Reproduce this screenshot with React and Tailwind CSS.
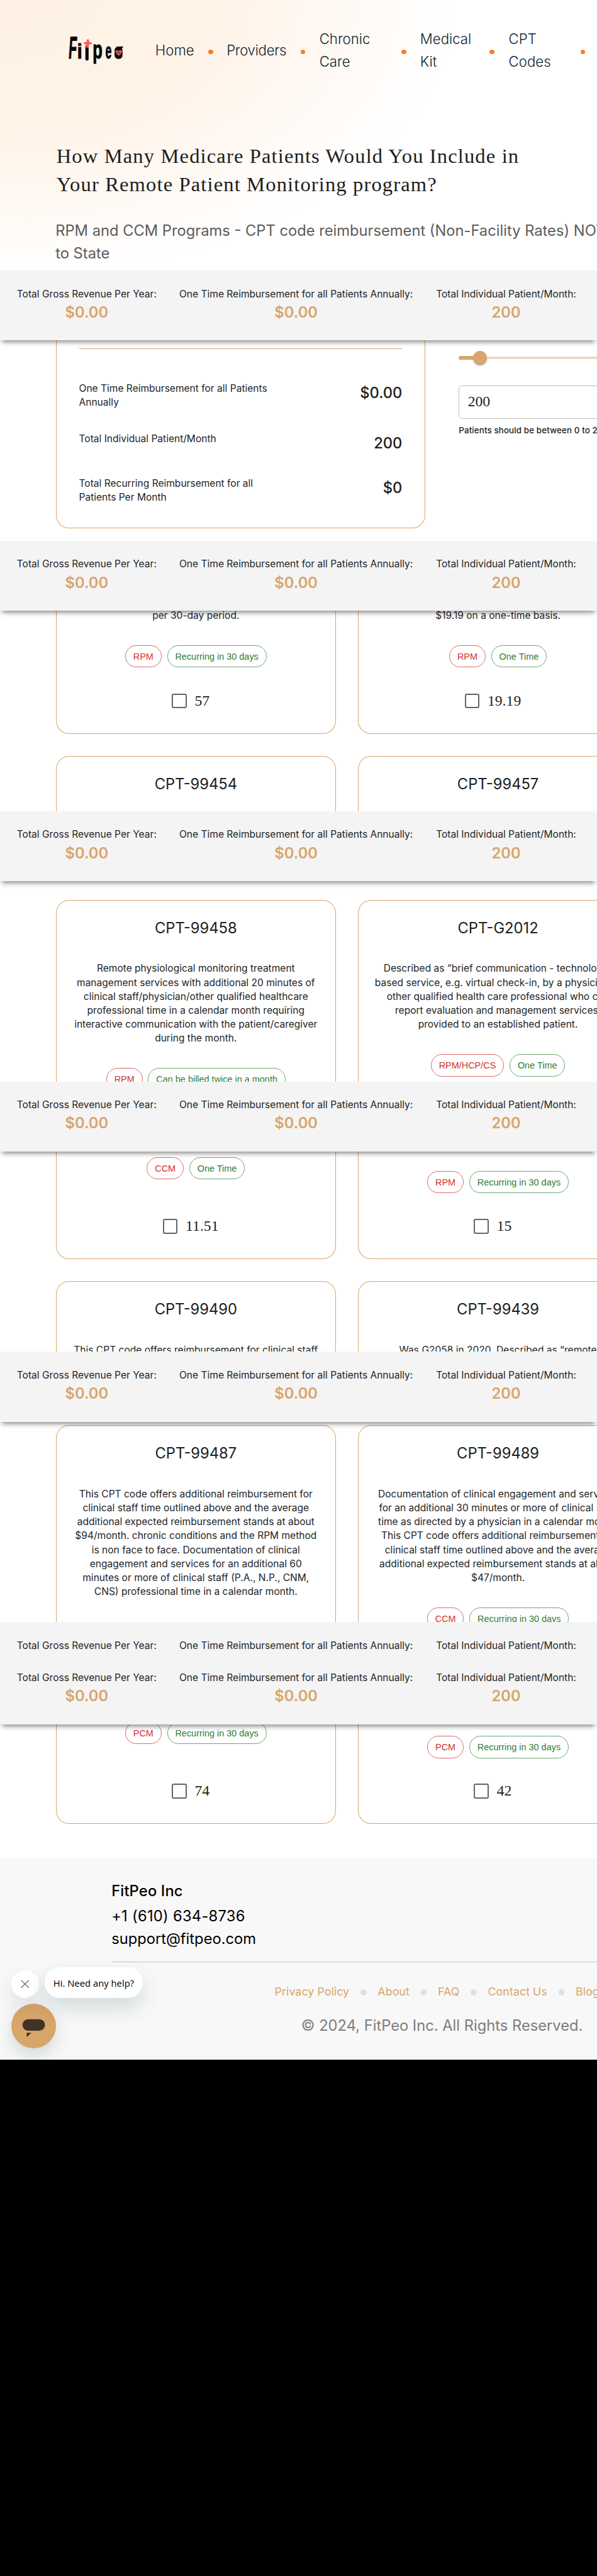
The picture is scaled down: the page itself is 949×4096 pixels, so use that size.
import React from "react";

const bars = [
  { label: "Total Gross Revenue Per Year:", value: "$0.00" },
  { label: "One Time Reimbursement for all Patients Annually:", value: "$0.00" },
  { label: "Total Individual Patient/Month:", value: "200" },
];

function SummaryBar({ cropped = false }) {
  return (
    <div
      className={
        cropped
          ? "h-[69px] shrink-0 overflow-hidden bg-[#f4f4f4]"
          : "relative z-10 h-[150px] shrink-0 bg-[#f4f4f4] shadow-[0_9px_10px_-4px_rgba(0,0,0,0.45)]"
      }
    >
      <div className="grid grid-cols-[300px_502px_303px] gap-x-[48px] pl-[36px] pt-[36px] text-center whitespace-nowrap">
        {bars.map((b) => (
          <div key={b.label}>
            <div className="text-[21px] leading-[30px] text-[#232527]">{b.label}</div>
            {!cropped && <div className="text-[32px] leading-[48px] font-semibold text-[#d8a56a]">{b.value}</div>}
          </div>
        ))}
      </div>
    </div>
  );
}

function Logo() {
  return (
    <svg width="118" height="62" viewBox="148 78 118 62" className="block overflow-visible" fill="#070707">
      <g fontFamily="Liberation Sans" fontWeight="700" stroke="#070707" strokeWidth="1.500" strokeLinejoin="round">
        <text transform="translate(147 127) skewX(-4) scale(.42 1)" fontSize="67">F</text>
        <text transform="translate(166.500 126.500) scale(.85 1)" fontSize="45">i</text>
        <text transform="translate(199.500 127) scale(.64 1)" fontSize="54">p</text>
        <text transform="translate(227 126.800) scale(.5 1)" fontSize="48">e</text>
      </g>
      <rect x="184" y="98" width="7" height="33" rx="3" />
      <path d="M187 87q2.500-3.500 5 0l.4 4.500 5.500.8q1.500 2-.5 3.500l-5.600.4-.6 7h-6l.2-7-4.200-.5q-1.500-2.200.3-3.800l5-.6z" fill="#ff5a60" />
      <rect x="246.700" y="101.500" width="17" height="26" rx="7.500" />
      <path d="M249 101.500q8-1 15.500-.8v2.800l-6 1.500z" />
      <path d="M255.700 120.700c-5-4-7-6-7-9 0-3.500 5-4 7-.8 2-3.200 7-2.700 7 .8 0 3-2 5-7 9z" fill="#ff5a60" />
      <path d="M250 114h3l1.500-3 1.500 6 1.500-3h4" fill="none" stroke="#070707" strokeWidth=".9" />
    </svg>
  );
}

const Dot = () => <span className="mt-[7px] block size-[10px] rounded-full bg-[#ff7a2c]" />;

function Hero() {
  return (
    <header className="h-[580px] shrink-0 overflow-hidden bg-[radial-gradient(ellipse_980px_600px_at_0_0,#fff2e5_0%,#fff3e7_45%,#fff8f2_70%,#ffffff_100%)] pt-[60px]">
      <nav className="grid h-[96px] grid-cols-[186px_114px_39px_159px_40px_176px_40px_149px_41px_154px_35px] items-center pl-[147px] text-[30px] leading-[48px] font-light text-[#0c2530]">
        <Logo />
        <a>Home</a>
        <Dot />
        <a className="tracking-[-0.4px]">Providers</a>
        <Dot />
        <a>Chronic<br />Care</a>
        <Dot />
        <a>Medical<br />Kit</a>
        <Dot />
        <a>CPT<br />Codes</a>
        <Dot />
      </nav>
      <h1 className="mt-[149px] pl-[121px] font-['Liberation_Serif',serif] text-[44px] leading-[60px] tracking-[1.5px] whitespace-nowrap text-[#1c1e20]">
        How Many Medicare Patients Would You Include in<br />Your Remote Patient Monitoring program?
      </h1>
      <p className="mt-[46px] pl-[119px] text-[32px] leading-[48px] whitespace-nowrap text-[#5c5c5c]">
        RPM and CCM Programs - CPT code reimbursement (Non-Facility Rates) NOT<br />to State
      </p>
    </header>
  );
}

const totals = [
  { label: ["One Time Reimbursement for all Patients", "Annually"], value: "$0.00" },
  { label: ["Total Individual Patient/Month"], value: "200" },
  { label: ["Total Recurring Reimbursement for all", "Patients Per Month"], value: "$0" },
];

function Lines({ lines }) {
  return lines.map((l) => (
    <span key={l} className="block whitespace-nowrap">{l}</span>
  ));
}

function Calculator() {
  return (
    <section className="flex h-[430px] shrink-0 overflow-hidden bg-white pl-[120px]">
      <div className="h-[403px] w-[792px] shrink-0 rounded-b-[28px] border-x border-b border-[#d8a56a] px-[48px] pt-[17px]">
        <div className="h-px bg-[#d8a56a]" />
        <div className="mt-[71px] flex flex-col gap-[48px]">
          {totals.map((t) => (
            <div key={t.value} className="flex items-start justify-between">
              <div className="text-[21px] leading-[30px] text-[#232527]"><Lines lines={t.label} /></div>
              <div className="text-[32px] leading-[48px] font-medium text-[#1c1e20]">{t.value}</div>
            </div>
          ))}
        </div>
      </div>
      <div className="ml-[72px] w-[600px] shrink-0 pt-[23px]">
        <div className="flex h-[30px] items-center">
          <div className="h-[8px] w-[30px] rounded-l-full bg-[#d8a56a]" />
          <div className="size-[30px] rounded-full bg-[#d8a56a] shadow-[0_2px_3px_rgba(0,0,0,0.3)]" />
          <div className="h-[6px] flex-1 bg-[#eedbc3]" />
        </div>
        <div className="mt-[44px] flex h-[71px] items-center rounded-[7px] border border-[#bdbdbd] pl-[18px] font-['Liberation_Serif',serif] text-[32px] text-[#1c1e20]">200</div>
        <div className="mt-[14px] text-[18px] leading-[24px] font-medium tracking-[0.18px] whitespace-nowrap text-[#1c1e20]">Patients should be between 0 to 2000</div>
      </div>
    </section>
  );
}

function Chips({ program, billing }) {
  return (
    <div className="flex h-[48px] shrink-0 justify-center gap-[12px] font-['Liberation_Sans',sans-serif] text-[19.5px] leading-[46px] whitespace-nowrap">
      <span className="rounded-full border border-[#e06767] px-[16px] text-[#d32f2f]">{program}</span>
      <span className="rounded-full border border-[#6da770] px-[16px] text-[#2e7d32]">{billing}</span>
    </div>
  );
}

function Rate({ value }) {
  return (
    <label className="mt-auto mb-[53px] flex justify-center gap-[17px] pr-[22px] font-['Liberation_Serif',serif] text-[32px] leading-[32px] text-[#1c1e20]">
      <span className="size-[32px] rounded-[4px] border-[4px] border-[#646464]" />
      {value}
    </label>
  );
}

function Description({ lines }) {
  return (
    <div className="flex shrink-0 flex-col items-center text-[21px] leading-[30px] text-[#232527]">
      <Lines lines={lines} />
    </div>
  );
}

function CardTop({ code, lines, program, billing }) {
  return (
    <div className="flex w-[600px] shrink-0 flex-col gap-[48px] overflow-hidden rounded-t-[28px] border-x border-t border-[#d8a56a] bg-white pt-[35px]">
      <h2 className="text-center text-[32px] leading-[48px] text-[#1c1e20]">{code}</h2>
      {lines && <Description lines={lines} />}
      {program && <Chips program={program} billing={billing} />}
    </div>
  );
}

function CardBottom({ line, program, billing, value, offset }) {
  return (
    <div className="flex w-[600px] shrink-0 flex-col rounded-b-[28px] border-x border-b border-[#d8a56a] bg-white">
      <div className={offset}>
        {line && <div className="mb-[48px]"><Description lines={[line]} /></div>}
        <Chips program={program} billing={billing} />
      </div>
      <Rate value={value} />
    </div>
  );
}

const row = "flex shrink-0 gap-[48px] pl-[120px]";

const links = ["Privacy Policy", "About", "FAQ", "Contact Us", "Blog"];

function ChatWidget() {
  return (
    <div className="absolute top-[235px] left-[24px] z-10">
      <div className="flex items-end gap-[12px]">
        <div className="flex size-[60px] items-center justify-center rounded-full bg-white shadow-[0_18px_40px_rgba(0,60,60,0.12)]">
          <svg width="18" height="18" viewBox="0 0 18 18" stroke="#566069" strokeWidth="1.500"><path d="M.8.8l16.400 16.400M17.200.8L.8 17.200" /></svg>
        </div>
        <div className="h-[66px] w-[210px] rounded-[32px] bg-white text-center font-['Open_Sans',sans-serif] text-[20px] leading-[68px] whitespace-nowrap text-black shadow-[0_20px_44px_rgba(0,60,60,0.16)]">Hi. Need any help?</div>
      </div>
      <div className="mt-[12px] size-[96px] rounded-full bg-[#d8a56a] shadow-[0_16px_36px_rgba(0,60,60,0.16)]">
        <svg width="96" height="96" viewBox="0 0 96 96" fill="#403224"><rect x="23.800" y="33.300" width="48.400" height="24.600" rx="12.300" /><path d="M33 62.300h10L33 72z" /></svg>
      </div>
    </div>
  );
}

function Footer() {
  return (
    <footer className="relative h-[433px] shrink-0 overflow-hidden bg-[#f8f8f8] pt-[47px]">
      <div className="pl-[239px] text-[32px] leading-[48px] text-black">
        <div className="font-medium tracking-[0.2px]">FitPeo Inc</div>
        <div className="mt-[6px] tracking-[0.38px]">+1 (610) 634-8736</div>
        <div>support@fitpeo.com</div>
        <div className="mt-[25px] ml-px h-px bg-[#c2c2c2]" />
      </div>
      <div className="mt-[47px] flex items-center gap-[24px] pl-[589px] text-[24px] leading-[36px] tracking-[0.1px] whitespace-nowrap text-[#d8a56a]">
        {links.map((l, i) => (
          <React.Fragment key={l}>
            {i > 0 && <span className="size-[13px] shrink-0 rounded-full bg-[#e0e0e0]" />}
            <a>{l}</a>
          </React.Fragment>
        ))}
      </div>
      <div className="mt-[30px] pl-[646px] text-[32px] leading-[48px] whitespace-nowrap text-[#7d7d7d]">© 2024, FitPeo Inc. All Rights Reserved.</div>
      <ChatWidget />
    </footer>
  );
}

export default function App() {
  return (
    <div className="h-[4096px] w-full overflow-hidden bg-black">
      <div className="flex w-[1281px] flex-col overflow-hidden font-['Inter',sans-serif] [zoom:0.7412]">
        <Hero />
        <SummaryBar />
        <Calculator />
        <SummaryBar />
        <section className="h-[430px] shrink-0 overflow-hidden bg-white">
          <div className={`${row} h-[264px]`}>
            <CardBottom line="per 30-day period." program="RPM" billing="Recurring in 30 days" value="57" offset="-mt-[4px]" />
            <CardBottom line="$19.19 on a one-time basis." program="RPM" billing="One Time" value="19.19" offset="-mt-[4px]" />
          </div>
          <div className={`${row} mt-[48px] h-[118px]`}>
            <CardTop code="CPT-99454" />
            <CardTop code="CPT-99457" />
          </div>
        </section>
        <SummaryBar />
        <section className="h-[430px] shrink-0 overflow-hidden bg-white pt-[41px]">
          <div className={`${row} h-[389px]`}>
            <CardTop code="CPT-99458" program="RPM" billing="Can be billed twice in a month" lines={["Remote physiological monitoring treatment", "management services with additional 20 minutes of", "clinical staff/physician/other qualified healthcare", "professional time in a calendar month requiring", "interactive communication with the patient/caregiver", "during the month."]} />
            <CardTop code="CPT-G2012" program="RPM/HCP/CS" billing="One Time" lines={["Described as “brief communication - technology-", "based service, e.g. virtual check-in, by a physician or", "other qualified health care professional who can", "report evaluation and management services,", "provided to an established patient."]} />
          </div>
        </section>
        <SummaryBar />
        <section className="h-[430px] shrink-0 overflow-hidden bg-white">
          <div className={`${row} h-[231px]`}>
            <CardBottom program="CCM" billing="One Time" value="11.51" offset="pt-[12px]" />
            <CardBottom program="RPM" billing="Recurring in 30 days" value="15" offset="pt-[42px]" />
          </div>
          <div className={`${row} mt-[48px] h-[151px]`}>
            <CardTop code="CPT-99490" lines={["This CPT code offers reimbursement for clinical staff"]} />
            <CardTop code="CPT-99439" lines={["Was G2058 in 2020. Described as “remote"]} />
          </div>
        </section>
        <SummaryBar />
        <section className="h-[430px] shrink-0 overflow-hidden bg-white pt-[8px]">
          <div className={`${row} h-[422px]`}>
            <CardTop code="CPT-99487" lines={["This CPT code offers additional reimbursement for", "clinical staff time outlined above and the average", "additional expected reimbursement stands at about", "$94/month. chronic conditions and the RPM method", "is non face to face. Documentation of clinical", "engagement and services for an additional 60", "minutes or more of clinical staff (P.A., N.P., CNM,", "CNS) professional time in a calendar month."]} />
            <CardTop code="CPT-99489" program="CCM" billing="Recurring in 30 days" lines={["Documentation of clinical engagement and services", "for an additional 30 minutes or more of clinical staff", "time as directed by a physician in a calendar month.", "This CPT code offers additional reimbursement for", "clinical staff time outlined above and the average", "additional expected reimbursement stands at about", "$47/month."]} />
          </div>
        </section>
        <SummaryBar cropped />
        <SummaryBar />
        <section className="h-[287px] shrink-0 bg-white">
          <div className={`${row} h-[214px]`}>
            <CardBottom program="PCM" billing="Recurring in 30 days" value="74" offset="-mt-[5px]" />
            <CardBottom program="PCM" billing="Recurring in 30 days" value="42" offset="pt-[25px]" />
          </div>
        </section>
        <Footer />
      </div>
    </div>
  );
}
